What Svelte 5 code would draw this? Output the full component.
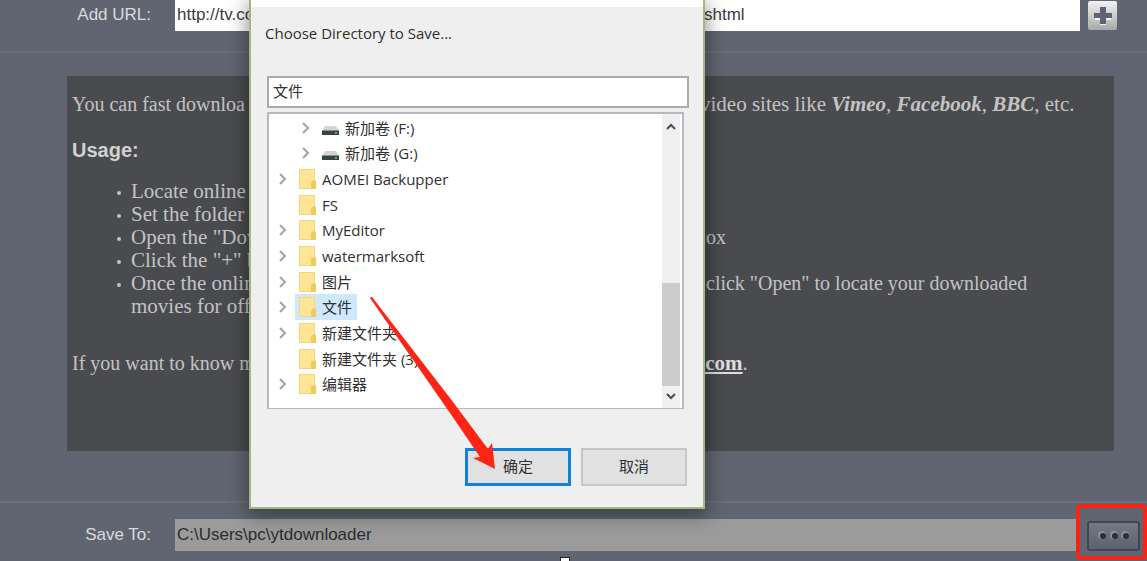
<script>
  let url = $state('http://tv.co');
  let saveTo = $state('C:\\Users\\pc\\ytdownloader');
  let folder = $state('文件');

  const nodes = [
    { name: '新加卷 (F:)', kind: 'drive', open: true },
    { name: '新加卷 (G:)', kind: 'drive', open: true },
    { name: 'AOMEI Backupper', kind: 'folder', open: true },
    { name: 'FS', kind: 'folder', open: false },
    { name: 'MyEditor', kind: 'folder', open: true },
    { name: 'watermarksoft', kind: 'folder', open: true },
    { name: '图片', kind: 'folder', open: true },
    { name: '文件', kind: 'folder', open: true },
    { name: '新建文件夹', kind: 'folder', open: true },
    { name: '新建文件夹 (3)', kind: 'folder', open: false },
    { name: '编辑器', kind: 'folder', open: true }
  ];
</script>

<main class="page">
  <div class="row url-row">
    <label for="url">Add URL:</label>
    <div class="field">
      <input id="url" type="text" bind:value={url} />
      <span>shtml</span>
    </div>
    <button class="plus" aria-label="Add">
      <svg width="18" height="18" viewBox="0 0 18 18">
        <path d="M6 2h6v5h5v6h-5v5H6v-5H1V7h5z" fill="#fff" opacity=".8" />
        <path d="M6 0h6v6h6v5h-6v6H6v-6H0V6h6z" fill="#5f6470" />
      </svg>
    </button>
  </div>

  <section class="panel">
    <p class="split"><span>You can fast downloa</span><span>video sites like <b><i>Vimeo</i></b>, <b><i>Facebook</i></b>, <b><i>BBC</i></b>, etc.</span></p>
    <h2>Usage:</h2>
    <ul class="steps">
      <li><span>Locate online</span></li>
      <li><span>Set the folder</span></li>
      <li><span>Open the "Dow</span><span>ox</span></li>
      <li><span>Click the "+" b</span></li>
      <li><span>Once the onlin<br />movies for off</span><span>click "Open" to locate your downloaded</span></li>
    </ul>
    <p class="split"><span>If you want to know m</span><span><a href="#top">.com</a>.</span></p>
  </section>

  <div class="row save-row">
    <label for="save">Save To:</label>
    <input id="save" class="save" type="text" bind:value={saveTo} />
    <div class="marked">
      <button class="browse" aria-label="Browse">
        <svg width="34" height="12" viewBox="0 0 34 12">
          {#each [6, 18, 29] as x}
            <circle cx={x - 1} cy="5" r="4" fill="#8b909a" />
            <circle cx={x} cy="6" r="3" fill="#2b2d32" />
          {/each}
        </svg>
      </button>
    </div>
  </div>
  <span class="handle"></span>

  <div class="dialog" role="dialog" aria-labelledby="dlg-title">
    <div class="titlebar"></div>
    <div class="body">
      <label id="dlg-title" for="folder">Choose Directory to Save...</label>
      <input id="folder" type="text" bind:value={folder} />
      <div class="tree">
        <ul>
          {#each nodes as node}
            <li class={node.kind}>
              <svg class="chev" width="10" height="14" viewBox="0 0 10 14">
                {#if node.open}<path d="M3 2l5 5-5 5" fill="none" stroke="#a3a3a3" stroke-width="2" />{/if}
              </svg>
              <button class:selected={node.name === folder}>
                {#if node.kind === 'drive'}
                  <svg width="17" height="20" viewBox="0 0 17 20">
                    <path d="M3 8h11l3 5H0z" fill="#d2d5d8" />
                    <path d="M0 12h17v5H0z" fill="#3d4043" />
                    <path d="M0 12h17v1H0z" fill="#8b8f92" />
                    <path d="M13 14h2v2h-2z" fill="#3fbf4a" />
                  </svg>
                {:else}
                  <svg width="17" height="20" viewBox="0 0 17 20">
                    <path d="M0 0h16v20H0z" fill="#f3d87b" />
                    <path d="M1 1h14v18H1z" fill="#ffe594" />
                    <path d="M13 12l3-1 1 1v8h-5v-7z" fill="#efcb5c" />
                  </svg>
                {/if}
                <span>{node.name}</span>
              </button>
            </li>
          {/each}
        </ul>
        <div class="scroll">
          <svg width="10" height="8" viewBox="0 0 10 8"><path d="M1 6l4-4 4 4" fill="none" stroke="#4e4e4e" stroke-width="2" /></svg>
          <div class="thumb"></div>
          <svg width="10" height="8" viewBox="0 0 10 8"><path d="M1 2l4 4 4-4" fill="none" stroke="#4e4e4e" stroke-width="2" /></svg>
        </div>
      </div>
      <div class="actions">
        <button class="ok">确定</button>
        <button>取消</button>
      </div>
    </div>
    <svg class="arrow" width="130" height="176" viewBox="0 0 130 176">
      <path d="M1 1L2 1 80 102 118 153 122 147 125 173 103 162 110 161 80 117 0 2z" fill="#ff2414" />
    </svg>
  </div>
</main>

<style>
  :global(body) {
    margin: 0;
    background: #616571;
  }
  .page {
    position: relative;
    overflow: hidden;
    min-height: 100vh;
    box-sizing: border-box;
    background: #616571;
    font-family: "Liberation Sans", Arial, sans-serif;
    font-size: 17px;
  }
  input, button {
    font: inherit;
    margin: 0;
    padding: 0;
    border: 0;
    border-radius: 0;
    box-sizing: border-box;
    color: inherit;
    min-width: 0;
  }
  input { outline: 0; }
  svg { display: block; flex: none; }
  .row {
    display: flex;
    align-items: center;
    box-sizing: border-box;
  }
  .row > label {
    width: 151px;
    margin-right: 24px;
    text-align: right;
    color: #d9dbdf;
    flex: none;
  }
  .url-row {
    height: 53px;
    padding: 0 30px 20px 0;
    border-bottom: 2px solid #6b6f7c;
  }
  .url-row > label { padding-bottom: 2px; }
  .field {
    flex: 1;
    display: flex;
    align-items: center;
    height: 31px;
    box-sizing: border-box;
    padding-bottom: 2px;
    background: #fff;
    color: #3c3c40;
  }
  .field input {
    width: 529px;
    padding: 0 2px;
    background: transparent;
  }
  .plus {
    width: 29px;
    height: 29px;
    margin-left: 8px;
    display: grid;
    place-items: center;
    border-radius: 2px;
    background: linear-gradient(#f2f2f2, #a9a9a9);
  }
  .panel {
    margin: 23px 33px 50px 67px;
    height: 375px;
    box-sizing: border-box;
    padding: 17px 5px 0;
    background: #4a4b4f;
    color: #c3c3c4;
    font-family: "Liberation Serif", "Times New Roman", serif;
    font-size: 20px;
    line-height: 23px;
  }
  .split, .steps li {
    display: grid;
    grid-template-columns: 628px 1fr;
    white-space: nowrap;
    margin: 0;
  }
  .split span:last-child, .steps span:first-child { font-size: 21px; }
  .panel h2 {
    margin: 23px 0 18px;
    font: bold 20px/23px "Liberation Sans", Arial, sans-serif;
    color: #d2d2d3;
  }
  .steps {
    margin: 0 0 34px;
    padding: 0 0 0 59px;
    list-style: none;
  }
  .steps li {
    position: relative;
    grid-template-columns: 575px 1fr;
  }
  .steps li::before {
    content: "";
    position: absolute;
    left: -14px;
    top: 11px;
    width: 4px;
    height: 4px;
    border-radius: 50%;
    background: #c3c3c4;
  }
  .panel a { color: #dedede; font-weight: bold; }
  .save-row {
    border-top: 2px solid #6b6f7c;
    padding-top: 1px;
  }
  .save {
    flex: 1;
    height: 32px;
    margin-top: 6px;
    padding: 0 2px;
    background: #9b9b9b;
    color: #2c2c2e;
  }
  .save-row > label { padding-top: 6px; }
  .marked {
    width: 71px;
    height: 56px;
    margin-left: -4px;
    box-sizing: border-box;
    border: 4px solid #fb2314;
    border-radius: 5px;
    display: grid;
    place-items: center;
    padding: 8px 0 0 4px;
    z-index: 1;
  }
  .browse {
    width: 53px;
    height: 30px;
    display: grid;
    place-items: center;
    border: 2px solid #42464f;
    border-radius: 3px;
    background: linear-gradient(#747985, #5c616d);
  }
  .handle {
    position: absolute;
    left: 560px;
    bottom: -6px;
    width: 8px;
    height: 8px;
    border: 1px solid #222;
    background: #fff;
  }
  .dialog {
    position: absolute;
    left: 249px;
    top: 0;
    width: 456px;
    box-sizing: border-box;
    border: 2px solid #a5b583;
    border-top: 0;
    background: #efefef;
    color: #303030;
    box-shadow: 0 4px 18px 2px rgba(0, 0, 0, 0.4);
    font-family: "Open Sans", "Noto Sans CJK SC", sans-serif;
    font-size: 15px;
  }
  .titlebar { height: 7px; background: #fff; }
  .body {
    padding: 16px 14px 21px 16px;
    display: flex;
    flex-direction: column;
  }
  .body > label { line-height: 20px; margin: 0 0 33px -2px; }
  .body > input {
    height: 32px;
    padding: 0 4px 4px;
    border: 2px solid #a9abae;
    background: #fff;
  }
  .tree {
    margin: 4px 5px 0 0;
    height: 297px;
    box-sizing: border-box;
    border: 2px solid #b4b8c0;
    border-bottom-width: 1px;
    display: flex;
    background: #fff;
  }
  .tree ul {
    flex: 1;
    margin: 1px 0 11px;
    padding: 0 0 0 8px;
    list-style: none;
    display: grid;
    grid-auto-rows: 1fr;
  }
  .tree li { display: flex; align-items: center; min-height: 0; gap: 8px; }
  .tree li.drive { padding-left: 23px; }
  .tree li button {
    display: flex;
    align-items: center;
    gap: 6px;
    height: 100%;
    padding: 0 5px 0 4px;
    background: transparent;
    line-height: 20px;
    white-space: nowrap;
  }
  .tree li button.selected { background: #cde8ff; }
  .scroll {
    width: 18px;
    margin-right: 2px;
    box-sizing: border-box;
    padding: 9px 0 8px;
    display: flex;
    flex-direction: column;
    align-items: center;
    background: #f0f0f0;
  }
  .thumb {
    width: 18px;
    height: 103px;
    margin: auto 0 6px;
    background: #cdcdcd;
  }
  .actions {
    display: flex;
    justify-content: flex-end;
    gap: 10px;
    margin: 39px 2px 0 0;
  }
  .actions button {
    width: 106px;
    height: 38px;
    padding-bottom: 4px;
    border: 2px solid #c6c6c6;
    background: #e1e1e1;
  }
  .actions .ok { border: 3px solid #1580d8; }
  .arrow {
    position: absolute;
    left: 119px;
    top: 296px;
    pointer-events: none;
  }
</style>
